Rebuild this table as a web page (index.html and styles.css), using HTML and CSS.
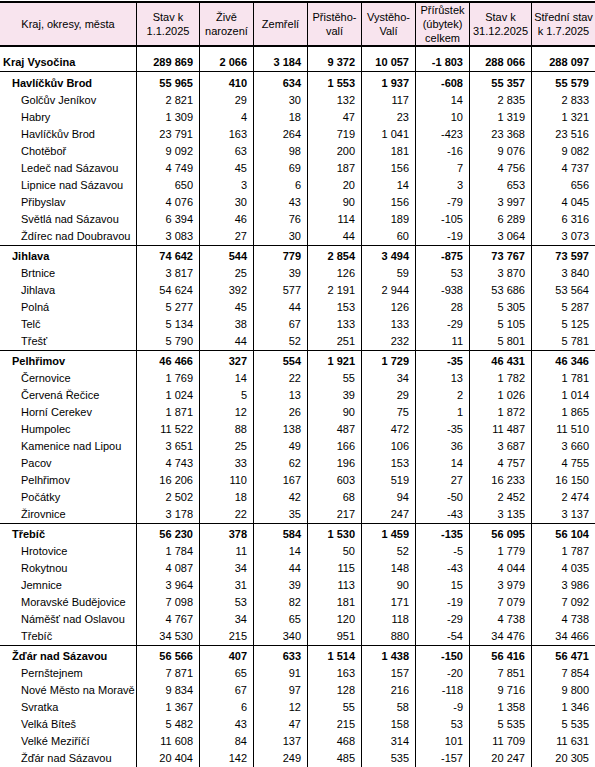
FILE: index.html
```html
<!DOCTYPE html>
<html lang="cs">
<head>
    <meta charset="UTF-8">
    <meta name="viewport" content="width=device-width, initial-scale=1.0">
    <title>Pohyb obyvatelstva - Kraj Vysočina 2025</title>
    <link rel="stylesheet" href="styles.css">
</head>
<body>

<table class="stats">
    <colgroup>
        <col class="c-name">
        <col class="c-wide">
        <col class="c-num"><col class="c-num"><col class="c-num"><col class="c-num"><col class="c-num">
        <col class="c-wide2">
        <col class="c-wide">
    </colgroup>
    <thead>
        <tr>
            <th>Kraj, okresy, města</th>
            <th>Stav k<br>1.1.2025</th>
            <th>Živě<br>narození</th>
            <th>Zemřelí</th>
            <th>Přistěho-<br>valí</th>
            <th>Vystěho-<br>Valí</th>
            <th>Přírůstek<br>(úbytek)<br>celkem</th>
            <th>Stav k<br>31.12.2025</th>
            <th>Střední stav<br>k 1.7.2025</th>
        </tr>
    </thead>
    <tbody>
        <tr class="kraj"><td>Kraj Vysočina</td><td>289 869</td><td>2 066</td><td>3 184</td><td>9 372</td><td>10 057</td><td>-1 803</td><td>288 066</td><td>288 097</td></tr>

        <tr class="grp first"><td>Havlíčkův Brod</td><td>55 965</td><td>410</td><td>634</td><td>1 553</td><td>1 937</td><td>-608</td><td>55 357</td><td>55 579</td></tr>
        <tr><td>Golčův Jeníkov</td><td>2 821</td><td>29</td><td>30</td><td>132</td><td>117</td><td>14</td><td>2 835</td><td>2 833</td></tr>
        <tr><td>Habry</td><td>1 309</td><td>4</td><td>18</td><td>47</td><td>23</td><td>10</td><td>1 319</td><td>1 321</td></tr>
        <tr><td>Havlíčkův Brod</td><td>23 791</td><td>163</td><td>264</td><td>719</td><td>1 041</td><td>-423</td><td>23 368</td><td>23 516</td></tr>
        <tr><td>Chotěboř</td><td>9 092</td><td>63</td><td>98</td><td>200</td><td>181</td><td>-16</td><td>9 076</td><td>9 082</td></tr>
        <tr><td>Ledeč nad Sázavou</td><td>4 749</td><td>45</td><td>69</td><td>187</td><td>156</td><td>7</td><td>4 756</td><td>4 737</td></tr>
        <tr><td>Lipnice nad Sázavou</td><td>650</td><td>3</td><td>6</td><td>20</td><td>14</td><td>3</td><td>653</td><td>656</td></tr>
        <tr><td>Přibyslav</td><td>4 076</td><td>30</td><td>43</td><td>90</td><td>156</td><td>-79</td><td>3 997</td><td>4 045</td></tr>
        <tr><td>Světlá nad Sázavou</td><td>6 394</td><td>46</td><td>76</td><td>114</td><td>189</td><td>-105</td><td>6 289</td><td>6 316</td></tr>
        <tr><td>Ždírec nad Doubravou</td><td>3 083</td><td>27</td><td>30</td><td>44</td><td>60</td><td>-19</td><td>3 064</td><td>3 073</td></tr>

        <tr class="grp sep"><td>Jihlava</td><td>74 642</td><td>544</td><td>779</td><td>2 854</td><td>3 494</td><td>-875</td><td>73 767</td><td>73 597</td></tr>
        <tr><td>Brtnice</td><td>3 817</td><td>25</td><td>39</td><td>126</td><td>59</td><td>53</td><td>3 870</td><td>3 840</td></tr>
        <tr><td>Jihlava</td><td>54 624</td><td>392</td><td>577</td><td>2 191</td><td>2 944</td><td>-938</td><td>53 686</td><td>53 564</td></tr>
        <tr><td>Polná</td><td>5 277</td><td>45</td><td>44</td><td>153</td><td>126</td><td>28</td><td>5 305</td><td>5 287</td></tr>
        <tr><td>Telč</td><td>5 134</td><td>38</td><td>67</td><td>133</td><td>133</td><td>-29</td><td>5 105</td><td>5 125</td></tr>
        <tr><td>Třešť</td><td>5 790</td><td>44</td><td>52</td><td>251</td><td>232</td><td>11</td><td>5 801</td><td>5 781</td></tr>

        <tr class="grp sep"><td>Pelhřimov</td><td>46 466</td><td>327</td><td>554</td><td>1 921</td><td>1 729</td><td>-35</td><td>46 431</td><td>46 346</td></tr>
        <tr><td>Černovice</td><td>1 769</td><td>14</td><td>22</td><td>55</td><td>34</td><td>13</td><td>1 782</td><td>1 781</td></tr>
        <tr><td>Červená Řečice</td><td>1 024</td><td>5</td><td>13</td><td>39</td><td>29</td><td>2</td><td>1 026</td><td>1 014</td></tr>
        <tr><td>Horní Cerekev</td><td>1 871</td><td>12</td><td>26</td><td>90</td><td>75</td><td>1</td><td>1 872</td><td>1 865</td></tr>
        <tr><td>Humpolec</td><td>11 522</td><td>88</td><td>138</td><td>487</td><td>472</td><td>-35</td><td>11 487</td><td>11 510</td></tr>
        <tr><td>Kamenice nad Lipou</td><td>3 651</td><td>25</td><td>49</td><td>166</td><td>106</td><td>36</td><td>3 687</td><td>3 660</td></tr>
        <tr><td>Pacov</td><td>4 743</td><td>33</td><td>62</td><td>196</td><td>153</td><td>14</td><td>4 757</td><td>4 755</td></tr>
        <tr><td>Pelhřimov</td><td>16 206</td><td>110</td><td>167</td><td>603</td><td>519</td><td>27</td><td>16 233</td><td>16 150</td></tr>
        <tr><td>Počátky</td><td>2 502</td><td>18</td><td>42</td><td>68</td><td>94</td><td>-50</td><td>2 452</td><td>2 474</td></tr>
        <tr><td>Žirovnice</td><td>3 178</td><td>22</td><td>35</td><td>217</td><td>247</td><td>-43</td><td>3 135</td><td>3 137</td></tr>

        <tr class="grp sep"><td>Třebíč</td><td>56 230</td><td>378</td><td>584</td><td>1 530</td><td>1 459</td><td>-135</td><td>56 095</td><td>56 104</td></tr>
        <tr><td>Hrotovice</td><td>1 784</td><td>11</td><td>14</td><td>50</td><td>52</td><td>-5</td><td>1 779</td><td>1 787</td></tr>
        <tr><td>Rokytnou</td><td>4 087</td><td>34</td><td>44</td><td>115</td><td>148</td><td>-43</td><td>4 044</td><td>4 035</td></tr>
        <tr><td>Jemnice</td><td>3 964</td><td>31</td><td>39</td><td>113</td><td>90</td><td>15</td><td>3 979</td><td>3 986</td></tr>
        <tr><td>Moravské Budějovice</td><td>7 098</td><td>53</td><td>82</td><td>181</td><td>171</td><td>-19</td><td>7 079</td><td>7 092</td></tr>
        <tr><td>Náměšť nad Oslavou</td><td>4 767</td><td>34</td><td>65</td><td>120</td><td>118</td><td>-29</td><td>4 738</td><td>4 738</td></tr>
        <tr><td>Třebíč</td><td>34 530</td><td>215</td><td>340</td><td>951</td><td>880</td><td>-54</td><td>34 476</td><td>34 466</td></tr>

        <tr class="grp sep"><td>Žďár nad Sázavou</td><td>56 566</td><td>407</td><td>633</td><td>1 514</td><td>1 438</td><td>-150</td><td>56 416</td><td>56 471</td></tr>
        <tr><td>Pernštejnem</td><td>7 871</td><td>65</td><td>91</td><td>163</td><td>157</td><td>-20</td><td>7 851</td><td>7 854</td></tr>
        <tr><td>Nové Město na Moravě</td><td>9 834</td><td>67</td><td>97</td><td>128</td><td>216</td><td>-118</td><td>9 716</td><td>9 800</td></tr>
        <tr><td>Svratka</td><td>1 367</td><td>6</td><td>12</td><td>55</td><td>58</td><td>-9</td><td>1 358</td><td>1 346</td></tr>
        <tr><td>Velká Bíteš</td><td>5 482</td><td>43</td><td>47</td><td>215</td><td>158</td><td>53</td><td>5 535</td><td>5 535</td></tr>
        <tr><td>Velké Meziříčí</td><td>11 608</td><td>84</td><td>137</td><td>468</td><td>314</td><td>101</td><td>11 709</td><td>11 631</td></tr>
        <tr><td>Žďár nad Sázavou</td><td>20 404</td><td>142</td><td>249</td><td>485</td><td>535</td><td>-157</td><td>20 247</td><td>20 305</td></tr>
    </tbody>
</table>

</body>
</html>
```

FILE: styles.css
```css
body {
    margin: 0;
    font-family: "Liberation Sans", Arial, sans-serif;
    font-size: 11px;
    color: #000;
    background: #fff;
}
.stats {
    width: 595px;
    margin-top: 1px;
    border-collapse: separate;
    border-spacing: 0;
    table-layout: fixed;
}
.c-name { width: 137px; }
.c-wide { width: 63px; }
.c-num { width: 54px; }
.c-wide2 { width: 62px; }
th, td {
    padding: 0 6px 0 0;
    border-right: 1px solid #000;
    line-height: 17px;
    text-align: right;
    white-space: nowrap;
    overflow: hidden;
}
th:last-child, td:last-child {
    border-right: none;
}
thead th {
    padding: 0;
    line-height: 14px;
    text-align: center;
    font-weight: normal;
    vertical-align: middle;
    background-color: #f8e4ee;
    border-top: 2px solid #000;
    border-bottom: 2px solid #000;
}
tbody td:first-child {
    text-align: left;
    padding-left: 21px;
}
.kraj td {
    padding-top: 7px;
    font-weight: bold;
    border-bottom: 1px solid #000;
}
.kraj td:first-child {
    padding-left: 3px;
}
.grp td {
    padding-top: 2px;
    font-weight: bold;
}
.grp.first td {
    padding-top: 3px;
}
.grp td:first-child {
    padding-left: 12px;
}
.sep td {
    border-top: 1px solid #000;
}
```
